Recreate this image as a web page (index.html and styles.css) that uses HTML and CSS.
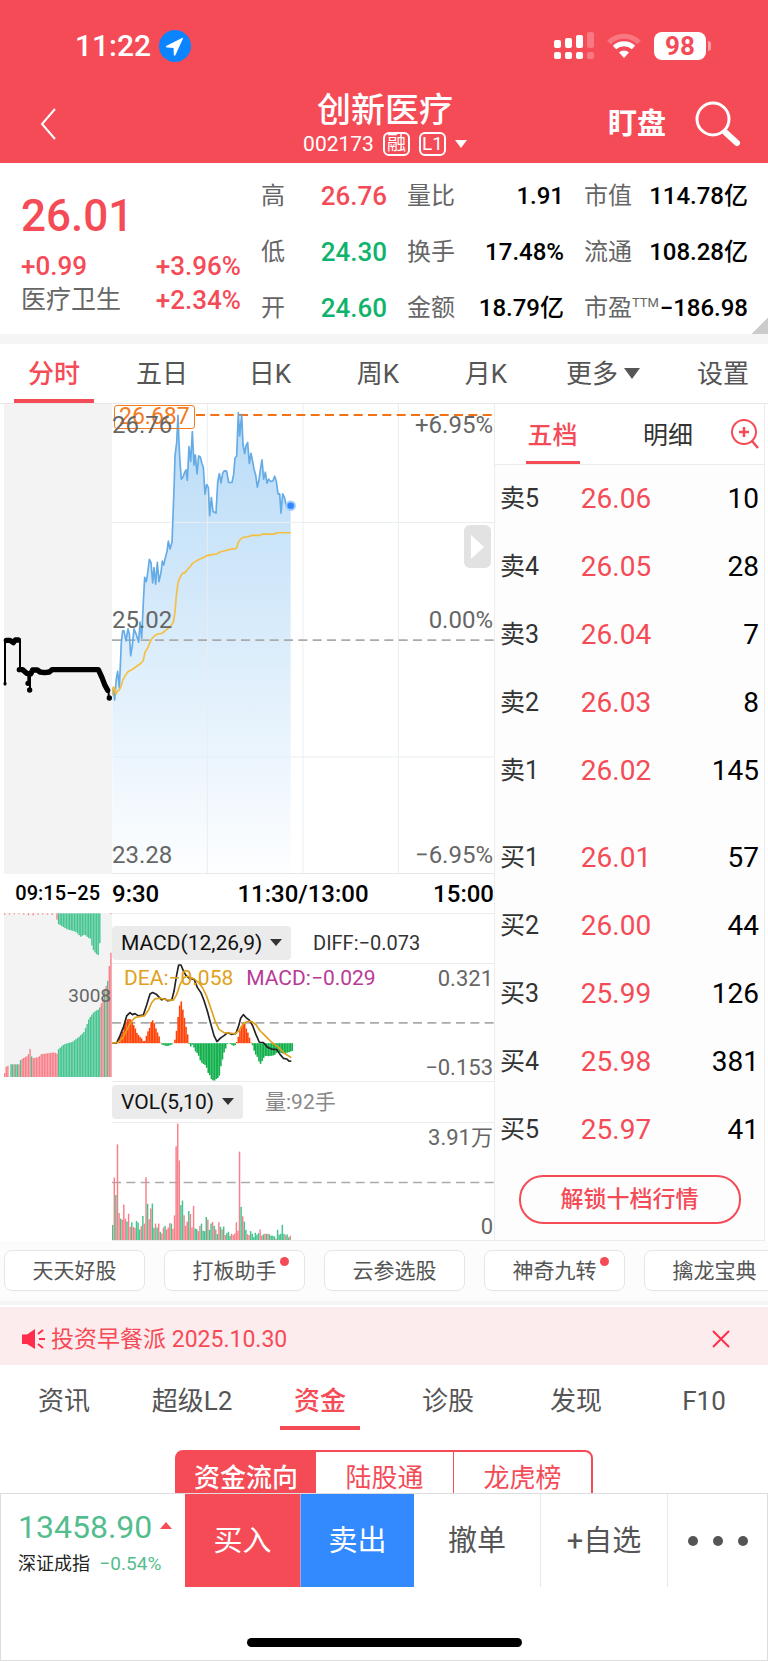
FILE: index.html
```html
<!DOCTYPE html>
<html lang="zh-CN">
<head>
  <meta charset="UTF-8">
  <meta name="viewport" content="width=device-width, initial-scale=1.0">
  <title>创新医疗 002173</title>
  <link rel="stylesheet" href="styles.css">
</head>
<body>

  <header class="top">
    <div class="status">
      <span class="clock">11:22</span>
      <svg class="locate" width="32" height="32" viewBox="0 0 32 32"><circle cx="16" cy="16" r="16" fill="#0a84ff"/><path d="M24 8.500 16.500 25c-.5 1.100-1.600.9-1.700-.2L14.600 18 8 17.600c-1.300-.1-1.500-1.300-.4-1.800L23 8c.8-.4 1.400-.2 1 .5z" fill="#fff"/></svg>
      <div class="status-right">
        <svg width="40" height="28" viewBox="0 0 40 28" fill="#fff">
          <rect x="0" y="8" width="7" height="8" rx="2"/><rect x="11" y="6" width="7" height="10" rx="2"/><rect x="22" y="3" width="7" height="13" rx="2"/><rect x="33" y="0" width="7" height="16" rx="2" opacity=".25"/>
          <rect x="0" y="20" width="7" height="7" rx="2"/><rect x="11" y="20" width="7" height="7" rx="2"/><rect x="22" y="20" width="7" height="7" rx="2"/><rect x="33" y="20" width="7" height="7" rx="2" opacity=".25"/>
        </svg>
        <svg width="36" height="26" viewBox="0 0 36 26" fill="none" stroke="#fff">
          <path d="M3 9.500a21 21 0 0 1 30 0" stroke-width="5" opacity=".25"/>
          <path d="M8.500 14.500a14 14 0 0 1 19 0" stroke-width="5"/>
          <path d="M18 25l-5-5.500a7.500 7.500 0 0 1 10 0z" fill="#fff" stroke="none"/>
        </svg>
        <div class="battery">98</div>
      </div>
    </div>
    <div class="nav">
      <button class="icon-btn back" aria-label="返回"><svg width="17" height="32" viewBox="0 0 17 32"><path d="M15 1 2 16l13 15" fill="none" stroke="#fff" stroke-width="2"/></svg></button>
      <div class="title">
        <h1>创新医疗</h1>
        <div class="code">002173 <span class="badge">融</span> <span class="badge">L1</span>
          <svg width="12" height="8" viewBox="0 0 12 8"><path d="M0 0h12L6 8z" fill="#fff"/></svg>
        </div>
      </div>
      <button class="watch">盯盘</button>
      <button class="icon-btn" aria-label="搜索"><svg width="46" height="46" viewBox="0 0 46 46" fill="none" stroke="#fff" stroke-linecap="round"><circle cx="18" cy="18" r="16" stroke-width="3"/><path d="M30 31 42 42" stroke-width="6"/></svg></button>
    </div>
  </header>

  <section class="quote">
    <div class="now">
      <strong class="last">26.01</strong>
      <div class="change"><b>+0.99</b><b>+3.96%</b></div>
      <div class="change"><span>医疗卫生</span><b>+2.34%</b></div>
    </div>
    <dl class="stats">
      <dt>高</dt><dd class="up">26.76</dd><dt>量比</dt><dd>1.91</dd><dt>市值</dt><dd>114.78亿</dd>
      <dt>低</dt><dd class="down">24.30</dd><dt>换手</dt><dd>17.48%</dd><dt>流通</dt><dd>108.28亿</dd>
      <dt>开</dt><dd class="down">24.60</dd><dt>金额</dt><dd>18.79亿</dd><dt>市盈<sup>TTM</sup></dt><dd>−186.98</dd>
    </dl>
  </section>

  <nav class="periods">
    <button class="active">分时</button>
    <button>五日</button>
    <button>日K</button>
    <button>周K</button>
    <button>月K</button>
    <button class="more">更多<i class="caret"></i></button>
    <button class="setting">设置</button>
  </nav>

  <main class="market">
    <!-- call auction, 09:15-09:25 -->
    <div class="auction">
      <div class="panel price-panel">
        <svg viewBox="0 24 336 1410" preserveAspectRatio="none">
          <rect x="12" y="24" width="324" height="1410" fill="#f3f3f3"/>
          <g fill="none" stroke="#000" stroke-linecap="round" stroke-linejoin="round">
            <path stroke-width="6" d="M15 733V865M60 733V822M85 835V862M90 835V882M326 885V906"/>
            <path stroke-width="16" d="M19 733H30L40 740 46 732H55M58 821H68L80 832 92 834 98 822H112L120 828 134 830 148 828 156 821H295L306 845 314 866 323 883M84 862V862M89 882V882M328 906V906"/>
            <path stroke-width="9" d="M15 862V864"/>
          </g>
        </svg>
      </div>
      <div class="auction-time">09:15−25</div>
      <div class="panel auction-vol">
        <svg viewBox="0 39 336 491" preserveAspectRatio="none">
          <rect x="12" y="39" width="324" height="491" fill="#f3f3f3"/>
          <g id="auctionBars"></g>
        </svg>
        <span class="label right at-mid">3008</span>
      </div>
    </div>

    <div class="charts">
      <div class="panel price-panel">
        <svg viewBox="336 24 1146 1410" preserveAspectRatio="none" fill="none">
          <defs><linearGradient id="fill" x1="0" y1="0" x2="0" y2="1"><stop offset="0" stop-color="#b8dbf7"/><stop offset="1" stop-color="#fdfeff"/></linearGradient></defs>
          <path id="priceArea" fill="url(#fill)"/>
          <path d="M336 380H1482M336 1085H1482M622 24V1434M909 24V1434M1195 24V1434" stroke="#e9edf0" stroke-width="3"/>
          <path d="M336 734H1482" stroke="#aaa" stroke-width="5" stroke-dasharray="27 16"/>
          <path d="M588 57H1476" stroke="#f47216" stroke-width="6" stroke-dasharray="27 16"/>
          <path id="priceLine" stroke="#65abe6" stroke-width="5" stroke-linejoin="round"/>
          <path id="avgLine" stroke="#f5bf42" stroke-width="5" stroke-linejoin="round"/>
          <circle cx="872" cy="330" r="16" fill="#a5cdfb"/><circle cx="872" cy="330" r="10" fill="#2f86ff"/>
        </svg>
        <span class="limit">26.687</span>
        <span class="label left at-high">26.76</span>
        <span class="label left at-zero">25.02</span>
        <span class="label left at-low">23.28</span>
        <span class="label right at-high">+6.95%</span>
        <span class="label right at-zero">0.00%</span>
        <span class="label right at-low">−6.95%</span>
        <button class="expand" aria-label="收起盘口"><svg viewBox="0 0 13 24"><path d="M0 0 13 12 0 24z" fill="#fff"/></svg></button>
      </div>
      <div class="times"><span>9:30</span><span>11:30/13:00</span><span>15:00</span></div>

      <div class="indicator first">
        <label class="pick"><select aria-label="指标"><option>MACD(12,26,9)</option></select></label>
        <span class="diff">DIFF:−0.073</span>
      </div>
      <div class="panel sub-panel">
        <svg viewBox="336 187 1146 356" preserveAspectRatio="none" fill="none">
          <path d="M336 366H1482" stroke="#aaa" stroke-width="5" stroke-dasharray="27 16"/>
          <g id="macdBars"></g>
          <path id="diffLine" stroke="#222" stroke-width="5" stroke-linejoin="round"/>
          <path id="deaLine" stroke="#e0a11b" stroke-width="5" stroke-linejoin="round"/>
        </svg>
        <div class="legend"><span class="dea">DEA:−0.058</span><span class="macd">MACD:−0.029</span></div>
        <span class="label right at-max">0.321</span>
        <span class="label right at-min">−0.153</span>
      </div>

      <div class="indicator">
        <label class="pick"><select aria-label="指标"><option>VOL(5,10)</option></select></label>
        <span class="hands">量:92手</span>
      </div>
      <div class="panel sub-panel">
        <svg viewBox="36 137 1146 356" preserveAspectRatio="none" fill="none">
          <path d="M36 318H1182" stroke="#aaa" stroke-width="5" stroke-dasharray="27 16"/>
          <g id="volBars"></g>
        </svg>
        <span class="label right at-max">3.91万</span>
        <span class="label right at-min">0</span>
      </div>
    </div>

    <aside class="book">
      <div class="book-tabs">
        <button class="active">五档</button>
        <button>明细</button>
        <button class="icon-btn" aria-label="放大"><svg width="30" height="32" viewBox="0 0 30 32" fill="none" stroke="#f54b57" stroke-width="2"><circle cx="14" cy="14" r="12"/><path d="M14 9v10M9 14h10M22 23l6 7" stroke-width="2.500"/></svg></button>
      </div>
      <table>
        <tbody>
          <tr><th>卖5</th><td class="price">26.06</td><td>10</td></tr>
          <tr><th>卖4</th><td class="price">26.05</td><td>28</td></tr>
          <tr><th>卖3</th><td class="price">26.04</td><td>7</td></tr>
          <tr><th>卖2</th><td class="price">26.03</td><td>8</td></tr>
          <tr><th>卖1</th><td class="price">26.02</td><td>145</td></tr>
        </tbody>
      </table>
      <table>
        <tbody>
          <tr><th>买1</th><td class="price">26.01</td><td>57</td></tr>
          <tr><th>买2</th><td class="price">26.00</td><td>44</td></tr>
          <tr><th>买3</th><td class="price">25.99</td><td>126</td></tr>
          <tr><th>买4</th><td class="price">25.98</td><td>381</td></tr>
          <tr><th>买5</th><td class="price">25.97</td><td>41</td></tr>
        </tbody>
      </table>
      <button class="unlock">解锁十档行情</button>
    </aside>
  </main>

  <div class="chips">
    <button>天天好股</button>
    <button class="dot">打板助手</button>
    <button>云参选股</button>
    <button class="dot">神奇九转</button>
    <button>擒龙宝典</button>
  </div>

  <div class="news">
    <svg width="24" height="22" viewBox="0 0 24 22"><path d="M0 6.500h5L13 1v20l-8-5H0z" fill="#ff2d4b"/><path d="M16 6l5-4M17 11h6M16 16l5 4" stroke="#ff2d4b" stroke-width="2"/></svg>
    <a href="#">投资早餐派 2025.10.30</a>
    <button class="icon-btn" aria-label="关闭"><svg width="18" height="18" viewBox="0 0 18 18"><path d="M1 1l16 16M17 1 1 17" stroke="#ff2d4b" stroke-width="2"/></svg></button>
  </div>

  <nav class="sections">
    <button>资讯</button>
    <button>超级L2</button>
    <button class="active">资金</button>
    <button>诊股</button>
    <button>发现</button>
    <button>F10</button>
  </nav>

  <section class="funds">
    <div class="segments">
      <button class="active">资金流向</button>
      <button>陆股通</button>
      <button>龙虎榜</button>
    </div>
  </section>

  <footer class="bottom">
    <div class="actions">
      <div class="index">
        <div class="points">13458.90 <i></i></div>
        <div class="name">深证成指 <span>−0.54%</span></div>
      </div>
      <button class="buy">买入</button>
      <button class="sell">卖出</button>
      <button class="plain">撤单</button>
      <button class="plain">+自选</button>
      <button class="dots" aria-label="更多"><i></i><i></i><i></i></button>
    </div>
    <div class="home"></div>
  </footer>

  <script src="charts.js"></script>
</body>
</html>
```
FILE: styles.css
```css
* {
  box-sizing: border-box;
}

body {
  margin: 0;
  background: #fff;
  color: #000;
  font-family: Roboto, 'Noto Sans CJK SC', sans-serif;
  font-size: 24px;
  line-height: 32px;
}

button {
  padding: 0;
  border: none;
  background: none;
  color: inherit;
  font: inherit;
  white-space: nowrap;
  cursor: pointer;
}

svg {
  display: block;
  flex: none;
}

/* header */

.top {
  height: 163px;
  background: #f54b57;
  color: #fff;
}

.status {
  display: flex;
  align-items: center;
  height: 80px;
  padding: 12px 62px 0 75px;
}

.clock {
  font-size: 30px;
  font-weight: 500;
}

.locate {
  margin-left: 8px;
}

.status-right {
  display: flex;
  align-items: center;
  gap: 12px;
  margin-left: auto;
}

.battery {
  position: relative;
  width: 52px;
  height: 28px;
  border-radius: 8px;
  background: #fff;
  color: #f54b57;
  font-size: 26px;
  font-weight: 700;
  line-height: 28px;
  text-align: center;
}

.battery::after {
  content: '';
  position: absolute;
  top: 9px;
  right: -5px;
  width: 3px;
  height: 10px;
  border-radius: 0 3px 3px 0;
  background: #fa9ea5;
}

.nav {
  display: grid;
  grid-template-columns: 160px 1fr 58px 46px;
  align-items: center;
  column-gap: 29px;
  height: 83px;
  padding: 4px 27px 0 40px;
}

.title {
  padding: 0 38px 4px 0;
  text-align: center;
}

h1 {
  margin: 0;
  font-size: 34px;
  font-weight: 500;
  line-height: 44px;
}

.code {
  display: flex;
  justify-content: center;
  align-items: center;
  gap: 9px;
  font-size: 21px;
  line-height: 24px;
}

.badge {
  width: 27px;
  height: 24px;
  border: 2px solid #fff;
  border-radius: 6px;
  font-size: 19px;
  line-height: 20px;
  text-align: center;
}

.watch {
  font-size: 29px;
  font-weight: 700;
}

/* quote */

.quote {
  position: relative;
  display: grid;
  grid-template-columns: 220px 1fr;
  column-gap: 20px;
  height: 181px;
  padding: 5px 20px 10px 21px;
  border-bottom: 10px solid #f5f5f5;
}

.quote::after {
  content: '';
  position: absolute;
  right: 0;
  bottom: 0;
  width: 16px;
  height: 16px;
  background: linear-gradient(135deg, transparent 50%, #ccc 50%);
}

.now {
  padding-top: 24px;
  color: #f54b57;
}

.last {
  display: block;
  margin-bottom: 9px;
  font-size: 44px;
  font-weight: 500;
  line-height: 48px;
}

.change {
  display: flex;
  justify-content: space-between;
  font-size: 26px;
  line-height: 34px;
}

.change b {
  font-weight: 500;
}

.change span {
  color: #666;
  font-size: 25px;
}

.stats {
  display: grid;
  grid-template-columns: 46px 80px 70px 107px 70px 1fr;
  grid-auto-rows: 56px;
  align-items: center;
  margin: 0;
}

.stats dt {
  padding-left: 20px;
  color: #666;
  white-space: nowrap;
}

.stats dt:nth-of-type(3n + 1) {
  padding-left: 0;
}

.stats dd {
  margin: 0;
  font-weight: 500;
  text-align: right;
  white-space: nowrap;
}

.stats .up,
.stats .down {
  font-size: 26px;
}

.up {
  color: #f54b57;
}

.down {
  color: #0fb36b;
}

.stats sup {
  font-size: 13px;
  line-height: 0;
}

/* period tabs */

.periods {
  display: flex;
  height: 60px;
  border-bottom: 1px solid #e8e8e8;
  color: #555;
  font-size: 26px;
}

.periods button {
  position: relative;
  flex: 108;
}

.periods .more {
  flex: 126;
}

.periods .setting {
  flex: none;
  width: 102px;
  padding-left: 12px;
}

.active {
  color: #f54b57;
  font-weight: 500;
}

.periods .active::after,
.sections .active::after,
.book-tabs .active::after {
  content: '';
  position: absolute;
  bottom: 0;
  left: 50%;
  width: 80px;
  height: 4px;
  margin-left: -40px;
  background: #f54b57;
}

.caret {
  display: inline-block;
  margin-left: 6px;
  border: solid transparent;
  border-width: 11px 8px 0;
  border-top-color: #555;
  vertical-align: 4px;
}

/* charts */

.market {
  display: grid;
  grid-template-columns: 112px 1fr 271px;
  padding-right: 3px;
}

.panel {
  position: relative;
}

.panel svg {
  width: 100%;
  height: 100%;
}

.price-panel {
  height: 470px;
}

.charts .price-panel {
  border-bottom: 1px solid #e8e8e8;
}

.auction-vol {
  height: 164px;
}

.sub-panel {
  height: 119px;
  border: solid #ececec;
  border-width: 1px 0;
}

.times {
  display: grid;
  grid-template-columns: 1fr auto 1fr;
  align-items: center;
  height: 39px;
  font-weight: 500;
}

.times span:last-child {
  text-align: right;
}

.auction-time {
  height: 39px;
  padding-right: 12px;
  font-size: 20px;
  font-weight: 500;
  line-height: 39px;
  text-align: right;
}

.label {
  position: absolute;
  color: #666;
  line-height: 24px;
}

.left { left: 0; }
.right { right: 1px; }
.at-high { top: 9px; }
.at-zero { top: 204px; }
.at-low { bottom: 6px; }
.at-max { top: 3px; }
.at-min { bottom: 1px; }

.sub-panel .label {
  font-size: 22px;
}

.panel .at-mid {
  top: 71px;
  font-size: 19px;
}

.limit {
  position: absolute;
  top: 1px;
  left: 2px;
  padding: 0 4px;
  border: 1px solid #f47a20;
  border-radius: 3px;
  color: #f47a20;
  font-size: 23px;
  line-height: 22px;
}

.expand {
  position: absolute;
  top: 121px;
  right: 3px;
  width: 27px;
  height: 43px;
  border-radius: 6px;
  background: #e2e2e2;
}

.expand svg {
  width: 13px;
  height: 24px;
  margin: 0 auto;
}

.indicator {
  display: flex;
  align-items: center;
  height: 40px;
  font-size: 20px;
}

.indicator.first {
  height: 50px;
  padding-top: 8px;
  border-top: 1px solid #ececec;
}

.pick {
  position: relative;
  border-radius: 4px;
  background: #ebebeb;
}

.pick::after {
  content: '';
  position: absolute;
  top: 13px;
  right: 9px;
  border: solid transparent;
  border-width: 7px 6px 0;
  border-top-color: #333;
  pointer-events: none;
}

.pick select {
  display: block;
  height: 34px;
  padding: 0 28px 0 9px;
  border: none;
  background: none;
  color: #111;
  font: 21px Roboto, sans-serif;
  appearance: none;
}

.diff,
.hands {
  margin-left: 22px;
  color: #333;
}

.hands {
  color: #888;
  font-size: 21px;
}

.legend {
  position: absolute;
  top: 2px;
  left: 12px;
  display: flex;
  gap: 13px;
  font-size: 21px;
  line-height: 24px;
}

.dea { color: #e0a11b; }
.macd { color: #b83a96; }

/* order book */

.book {
  border: solid #ececec;
  border-width: 0 1px 1px;
  background: #fdfdfd;
}

.book-tabs {
  display: grid;
  grid-template-columns: 115px 1fr 38px;
  height: 61px;
  border-bottom: 1px solid #ececec;
  background: #fff;
  color: #333;
  font-size: 25px;
}

.book-tabs button {
  position: relative;
  padding-top: 4px;
}

.book-tabs .icon-btn {
  padding: 0 0 0 4px;
}

.book-tabs .active {
  color: #f54b57;
}

.book-tabs .active::after {
  width: 54px;
  height: 3px;
  margin-left: -27px;
}

.book table {
  width: 100%;
  margin-bottom: 19px;
  border-collapse: collapse;
  table-layout: fixed;
}

.book tr {
  height: 68px;
}

.book th {
  width: 59px;
  padding: 0 0 0 5px;
  color: #333;
  font-size: 25px;
  font-weight: 400;
  text-align: left;
}

.book td {
  padding: 0 5px 0 0;
  font-size: 28px;
  text-align: right;
}

.book .price {
  width: 124px;
  padding: 0;
  color: #f54b57;
  text-align: center;
}

.unlock {
  display: block;
  width: 222px;
  height: 49px;
  margin: -8px auto 0;
  border: 2px solid #f54b57;
  border-radius: 24px;
  color: #f54b57;
  font-size: 23px;
  font-weight: 500;
}

/* chips */

.chips {
  display: flex;
  gap: 19px;
  padding: 9px 0 10px 4px;
  border-bottom: 4px solid #f5f5f5;
  background: #fcfcfc;
  overflow: hidden;
}

.chips button {
  position: relative;
  flex: none;
  width: 141px;
  height: 41px;
  border: 1px solid #e6e6e6;
  border-radius: 8px;
  background: #fff;
  color: #555;
  font-size: 21px;
}

.chips .dot::after {
  content: '';
  position: absolute;
  top: 6px;
  right: 15px;
  width: 9px;
  height: 9px;
  border-radius: 50%;
  background: #f54b57;
}

/* news */

.news {
  display: flex;
  align-items: center;
  height: 58px;
  margin-top: 2px;
  padding: 6px 38px 0 22px;
  background: #fdecee;
}

.news a {
  flex: 1;
  padding: 2px 0 0 5px;
  color: #f54b57;
  font-size: 23px;
  text-decoration: none;
}

/* section tabs */

.sections {
  display: grid;
  grid-template-columns: repeat(6, 1fr);
  height: 65px;
  color: #555;
  font-size: 26px;
}

.sections button {
  position: relative;
  padding-top: 6px;
}

.funds {
  display: flex;
  justify-content: center;
  height: 63px;
  padding-top: 20px;
  overflow: hidden;
}

.segments {
  display: grid;
  grid-template-columns: repeat(3, 138px);
  height: 55px;
  border: 2px solid #f54b57;
  border-radius: 8px;
  color: #f54b57;
  font-size: 26px;
}

.segments button + button {
  border-left: 1px solid #f54b57;
}

.segments .active {
  background: #f54b57;
  color: #fff;
}

/* bottom bar */

.bottom {
  height: 168px;
  border: 1px solid #ddd;
  background: #fff;
}

.actions {
  display: grid;
  grid-template-columns: 184px 115px 114px 1fr 1fr 99px;
  height: 93px;
  color: #555;
  font-size: 29px;
}

.index {
  padding: 16px 0 0 17px;
  white-space: nowrap;
}

.points {
  color: #54bd8d;
  font-size: 32px;
  line-height: 34px;
}

.points i {
  display: inline-block;
  border: solid transparent;
  border-width: 0 6px 7px;
  border-bottom-color: #f54b57;
  vertical-align: 9px;
}

.name {
  margin-top: 8px;
  color: #222;
  font-size: 18px;
  line-height: 24px;
}

.name span {
  margin-left: 5px;
  color: #54bd8d;
  font-size: 19px;
}

.buy {
  background: #f54b57;
  color: #fff;
}

.sell {
  border-left: 1px solid #a9a0d8;
  background: #338aff;
  color: #fff;
}

.plain {
  border-right: 1px solid #e8e8e8;
}

.dots {
  display: flex;
  justify-content: center;
  align-items: center;
  gap: 15px;
}

.dots i {
  width: 10px;
  height: 10px;
  border-radius: 50%;
  background: #555;
}

.home {
  width: 275px;
  height: 9px;
  margin: 51px auto 0;
  border-radius: 5px;
  background: #000;
}
```
FILE: charts.js
```js
const RED = '#f9808a';
const GREEN = '#43c58f';
const STEP = 4.755; // one minute

const price = '337,895 340,880 344,914 349,850 353,828 358,878 364,740 368,706 372,706 378,736 384,700 388,715 392,781 397,750 402,700 408,715 416,740 420,680 425,728 430,620 434,545 439,558 444,525 448,491 453,500 458,562 462,516 467,566 472,500 477,558 483,530 487,496 491,508 496,486 501,467 505,436 510,460 516,440 519,360 523,250 525,180 530,140 534,58 537,140 540,200 544,250 550,242 553,232 558,222 562,254 567,152 572,197 577,107 582,208 586,177 591,234 596,180 601,184 606,203 610,215 615,295 620,266 625,275 629,360 634,305 639,347 648,352 653,260 658,233 663,261 668,232 673,225 680,226 686,260 696,260 701,235 705,187 710,180 715,50 719,120 725,55 729,145 734,173 738,150 743,140 748,203 753,172 758,197 762,220 767,237 772,274 777,252 781,222 786,192 791,250 796,229 801,262 806,250 812,257 819,255 824,241 829,256 834,294 839,294 843,352 848,294 853,303 858,326 863,335 872,330';
const avg = '337,900 339,876 343,876 348,897 353,886 358,884 364,870 368,855 376,840 384,829 400,820 412,811 422,804 430,795 435,770 442,760 448,745 455,730 465,720 475,715 485,714 495,706 505,698 515,688 520,680 525,650 529,600 534,562 540,545 548,533 555,531 563,521 572,511 578,503 590,495 600,490 612,485 620,480 635,477 650,475 660,469 675,465 690,461 705,459 710,457 715,440 722,430 730,425 745,423 755,419 780,419 787,415 823,415 830,411 873,411';
const diff = '337,428 350,427 360,405 370,380 380,345 390,335 397,341 405,338 415,345 430,342 440,312 450,278 458,274 470,280 485,296 495,293 503,299 515,297 522,270 530,220 536,190 543,190 550,208 558,222 570,232 582,233 592,258 603,275 612,298 622,330 632,368 642,405 651,423 662,412 672,405 683,396 695,401 708,398 716,375 722,352 730,341 738,350 748,358 758,375 768,402 778,425 790,426 802,440 815,446 830,447 840,462 850,474 860,476 868,483 874,482';
const dea = '337,428 355,425 368,412 380,388 392,365 405,350 418,347 433,345 445,328 455,305 465,293 480,291 500,296 520,297 530,280 540,250 552,228 562,224 580,231 595,242 608,260 620,285 632,320 645,360 657,386 672,396 690,397 705,400 718,388 730,368 742,362 755,362 768,372 780,390 795,405 815,425 835,440 855,460 874,472';

const macd = '337,428 350,426 356,410 365,395 372,370 380,355 388,353 397,370 402,378 407,395 417,408 425,416 430,428 435,412 440,395 446,383 450,365 455,357 460,365 465,382 470,395 476,410 480,428 485,433 500,437 515,431 519,427 525,410 530,365 534,330 540,293 545,320 550,345 555,375 560,398 565,430 570,438 575,432 580,442 585,455 592,460 597,478 605,490 612,493 617,500 620,515 627,525 632,538 640,543 648,535 655,532 658,505 663,490 668,460 673,450 678,432 683,427 688,430 700,437 706,430 710,418 715,400 720,378 725,375 729,360 735,380 740,392 745,408 750,425 755,433 760,450 765,463 770,470 775,485 780,492 785,480 790,470 795,465 800,468 820,465 830,455 850,460 865,455 878,450';
const auctionLow = '12,518 16,500 22,496 24,530 29,530 30,492 56,492 60,478 82,466 88,446 94,474 115,470 120,462 163,456 168,464 172,448 190,432 215,425 235,410 250,395 258,375 265,355 280,335 295,327 300,315 306,300 311,270 316,258 321,243 325,205 329,170 334,132';
const auctionTop = '12,44 60,42 90,47 120,43 164,45 168,56 173,72 190,82 200,88 225,95 240,110 252,103 262,113 270,116 275,145 285,160 297,168 298,40 328,40 334,46';

const vol = '447g 303r 356g 202r 411r 428g 431r 385r 428r 437g 413r 453r 439g 453r 456r 435g 440g 461g 451r 420g 443r 302r 383g 430r 397r 382g 456g 443r 455g 443r 468g 473r 455r 450g 461r 455r 442r 443g 459r 418r 208r 139r 251r 387g 373g 418r 450r 437r 405g 414r 455r 389r 458g 460g 466r 450r 443g 465g 466g 423g 431r 462g 443g 438r 450g 461r 475g 439r 453g 461r 452g 478r 472g 468g 480g 474r 478r 473r 439r 465r 224r 392g 421r 437g 462g 475r 478r 466g 474g 484g 471g 477g 472g 461r 480r 476g 474r 474g 474r 476g 480g 480g 482g 489r 462g 477g 474g 447g 474g 478r 476g 485g 480r';

function points(text) {
  return text.split(' ').map(p => p.split(',').map(Number));
}

function line(id, text) {
  document.getElementById(id).setAttribute('d', 'M' + text.split(' ').join('L'));
}

function valueAt(list, x) {
  for (let i = 1; i < list.length; i++) {
    const [x0, y0] = list[i - 1];
    const [x1, y1] = list[i];
    if (x <= x1) return y0 + (y1 - y0) * (x - x0) / (x1 - x0);
  }
  return list[list.length - 1][1];
}

function bar(id, x, from, to, color, width) {
  const rect = document.createElementNS('http://www.w3.org/2000/svg', 'rect');
  rect.setAttribute('x', x);
  rect.setAttribute('y', Math.min(from, to));
  rect.setAttribute('width', width);
  rect.setAttribute('height', Math.abs(to - from));
  rect.setAttribute('fill', color);
  document.getElementById(id).appendChild(rect);
}

line('priceLine', price);
line('avgLine', avg);
line('diffLine', diff);
line('deaLine', dea);
document.getElementById('priceArea').setAttribute('d', 'M337,1434L' + price.split(' ').join('L') + 'V1434Z');

const macdPoints = points(macd);
for (let x = 337; x < 876; x += STEP) {
  const y = valueAt(macdPoints, x);
  bar('macdBars', x, 428, y, y < 428 ? '#ff4208' : '#12b04c', 4.8);
}

vol.split(' ').forEach((v, i) => {
  bar('volBars', 36 + i * STEP, 493, parseInt(v), v.endsWith('r') ? RED : GREEN, 4.4);
});

const low = points(auctionLow);
const high = points(auctionTop);
for (let x = 12, i = 0; x < 334; x += STEP, i++) {
  const mixed = x > 28 && x < 60 && i % 3 !== 0;
  const green = mixed || (x > 90 && x < 95) || (x > 170 && x < 298) || (x > 308 && x < 328 && i % 2);
  bar('auctionBars', x, 530, valueAt(low, x), green ? GREEN : RED, 4.2);
  if (x > 170 || i % 3 === 0) {
    bar('auctionBars', x, 40, valueAt(high, x), x > 170 && x < 298 ? GREEN : RED, 4.2);
  }
}
```
